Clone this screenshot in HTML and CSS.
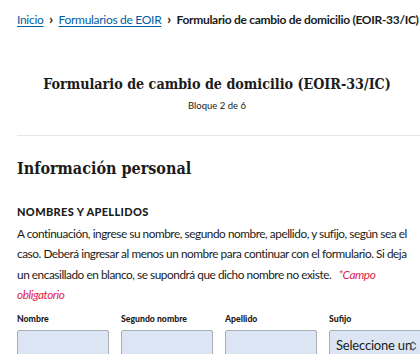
FILE: index.html
```html
<!DOCTYPE html>
<html lang="es">
<head>
<meta charset="utf-8">
<link rel="stylesheet" href="styles.css">
</head>
<body>
<div class="page">
  <nav class="crumbs">
    <a href="#">Inicio</a>
    <span class="sep">&#x203A;</span>
    <a href="#">Formularios de EOIR</a>
    <span class="sep">&#x203A;</span>
    <span class="current">Formulario de cambio de domicilio (EOIR-33/IC)</span>
  </nav>
  <header class="head">
    <h1>Formulario de cambio de domicilio (EOIR-33/IC)</h1>
    <p class="step">Bloque 2 de 6</p>
  </header>
  <hr class="rule">
  <h2>Información personal</h2>
  <h3>NOMBRES Y APELLIDOS</h3>
  <p class="intro">A continuación, ingrese su nombre, segundo nombre, apellido, y sufijo, según sea el caso. Deberá ingresar al menos un nombre para continuar con el formulario. Si deja un encasillado en blanco, se supondrá que dicho nombre no existe.&nbsp; <span class="req">*Campo obligatorio</span></p>
  <div class="fields">
    <div class="field"><label>Nombre</label><div class="box"></div></div>
    <div class="field"><label>Segundo nombre</label><div class="box"></div></div>
    <div class="field"><label>Apellido</label><div class="box"></div></div>
    <div class="field wide"><label>Sufijo</label><div class="box select"><span>Seleccione un</span><svg class="chev" width="8" height="10" viewBox="0 0 8 10"><path d="M1 3.5 4 1 7 3.5M1 6.5 4 9 7 6.5" fill="none" stroke="#565c65" stroke-width="1.2"/></svg></div></div>
  </div>
</div>
</body>
</html>
```
FILE: styles.css
```css
html, body { margin: 0; padding: 0; background: #fff; overflow: hidden; }
body { width: 420px; height: 354px; font-family: Lato, "Noto Sans", sans-serif; color: #1b1b1b; }
.page { padding: 0 0 0 17px; width: 403px; }
.crumbs { padding-top: 9px; font-size: 12px; letter-spacing: -0.3px; line-height: 20px; white-space: nowrap; }
.crumbs a { color: #005ea2; text-decoration: underline; text-underline-offset: 2px; }
.crumbs .sep { font-weight: 900; margin: 0 3px; font-size: 13px; }
.crumbs .current { font-weight: 700; }
.head { width: 400px; text-align: center; padding-top: 44px; }
h1 { margin: 0; font-family: "DejaVu Serif Condensed", "DejaVu Serif", serif; font-weight: 700; font-size: 14.2px; line-height: 20px; }
.step { margin: 5px 0 0; font-size: 9.5px; line-height: 14px; }
.rule { margin: 22px 0 0; width: 403px; border: 0; border-top: 1px solid #e6e6e6; }
h2 { margin: 21px 0 0; font-family: "DejaVu Serif Condensed", "DejaVu Serif", serif; font-weight: 700; font-size: 16px; line-height: 24px; }
h3 { margin: 23px 0 0; font-size: 11px; font-weight: 900; letter-spacing: 0.35px; line-height: 16px; }
.intro { margin: 4px 0 0; width: 401px; font-size: 11.8px; letter-spacing: -0.45px; line-height: 20.4px; }
.req { color: #e0244f; font-style: italic; margin-left: 2px; }
.fields { display: flex; gap: 12px; margin-top: 7.6px; }
.field { width: 92px; flex: none; display: flex; flex-direction: column; }
.field.wide { width: 120px; }
label { font-size: 8.7px; font-weight: 900; line-height: 12px; }
.box { margin-top: 5px; height: 40px; background: #dbe5f4; border: 1px solid #a9aeb1; border-radius: 2px; box-sizing: border-box; }
.select { display: flex; align-items: flex-start; gap: 0; font-size: 13px; letter-spacing: -0.2px; padding: 4px 6px; line-height: 20px; }
.chev { margin: 6px 0 0 -3px; }
```
